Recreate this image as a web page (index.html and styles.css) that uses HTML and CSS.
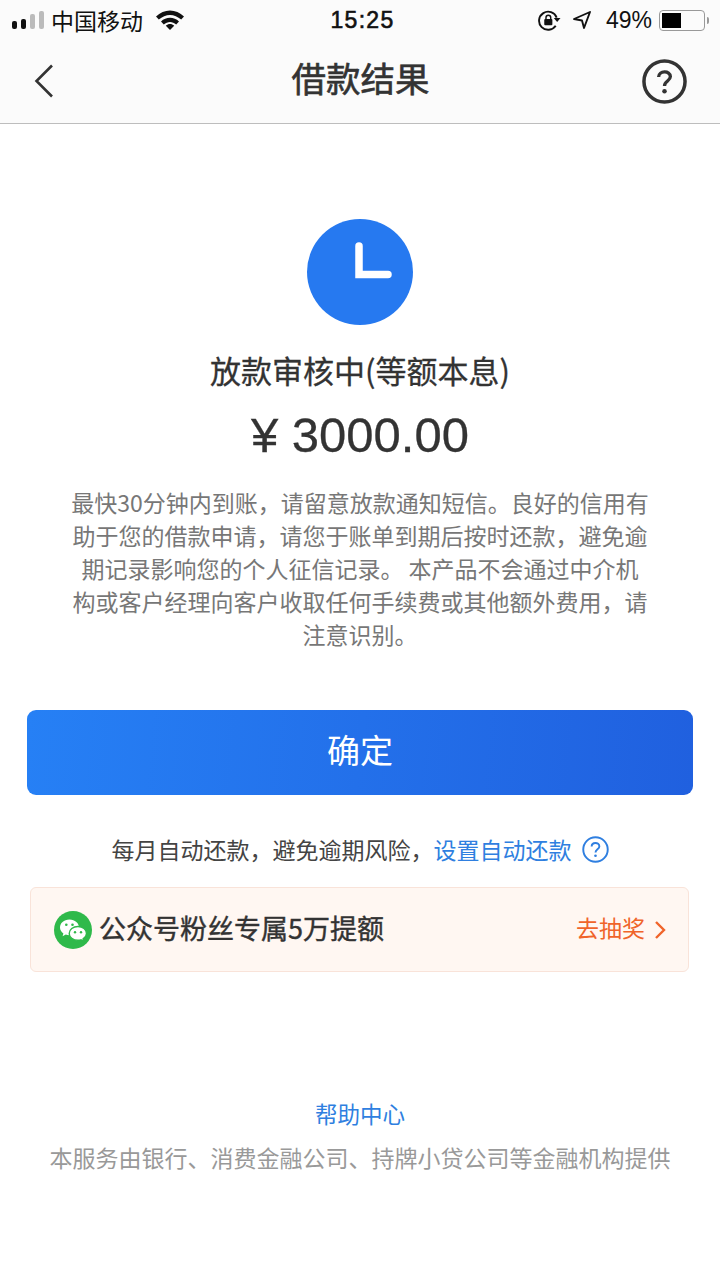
FILE: index.html
```html
<!DOCTYPE html>
<html lang="zh-CN">
  <head>
    <meta charset="UTF-8" />
    <meta name="viewport" content="width=device-width, initial-scale=1.0" />
    <title>借款结果</title>
    <link rel="stylesheet" href="styles.css">
  </head>
  <body>
    <div class="top">
      <div class="statusBar">
        <div class="statusLeft">
          <div class="signal">
            <span class="bar on"></span>
            <span class="bar on"></span>
            <span class="bar"></span>
            <span class="bar"></span>
          </div>
          <span class="carrier">中国移动</span>
          <svg class="wifi" width="28" height="20" viewBox="0 0 28 20">
            <path d="M0 6.500C8 -1.500 20 -1.500 28 6.500L25.200 9.600C18.500 3.300 9.500 3.300 2.800 9.600Z" fill="#111" />
            <path d="M5 11.500C10 6.500 18 6.500 23 11.500L20.200 14.500C16.500 11 11.500 11 7.800 14.500Z" fill="#111" />
            <path d="M9.800 15.800C12.300 13.500 15.700 13.500 18.200 15.800L14 20Z" fill="#111" />
          </svg>
        </div>
        <span class="time">15:25</span>
        <div class="statusRight">
          <svg class="lock" width="23" height="21" viewBox="0 0 24 22">
            <path d="M18.500 16.500A9.500 9.500 0 1 1 19.500 8" fill="none" stroke="#111" stroke-width="2" />
            <path d="M16.500 8.500H23.500L20 12.500Z" fill="#111" />
            <rect x="6.500" y="9.500" width="8.500" height="6.500" rx="1" fill="#111" />
            <path d="M8.300 10V8A2.500 2.500 0 0 1 13.300 8V10" fill="none" stroke="#111" stroke-width="1.500" />
          </svg>
          <svg class="location" width="20" height="20" viewBox="0 0 20 20">
            <path d="M18 2L2 9L10 10.500L12 18Z" fill="none" stroke="#111" stroke-width="1.900" stroke-linejoin="round" />
          </svg>
          <span class="percent">49%</span>
          <div class="battery"><div class="batteryFill"></div></div>
          <div class="batteryTip"></div>
        </div>
      </div>
      <div class="navBar">
        <svg class="back" width="20" height="34" viewBox="0 0 20 34">
          <path d="M18 1.500L2.500 17L18 32.500" fill="none" stroke="#333" stroke-width="2.600" />
        </svg>
        <h1 class="navTitle">借款结果</h1>
        <svg class="help" width="45" height="45" viewBox="0 0 46 46">
          <circle cx="23" cy="23" r="21" fill="none" stroke="#333" stroke-width="3.600" />
          <path d="M17 18.500C17 11.500 29 11.500 29 18C29 22.500 23 22.500 23 27.500" fill="none" stroke="#333" stroke-width="3.400" />
          <circle cx="23" cy="33" r="2.300" fill="#333" />
        </svg>
      </div>
    </div>

    <div class="result">
      <svg class="clock" width="106" height="106" viewBox="0 0 106 106">
        <circle cx="53" cy="53" r="53" fill="#2679f0" />
        <path d="M52 27V55.500H81" fill="none" stroke="#fff" stroke-width="7.500" stroke-linecap="round" />
      </svg>
      <h2 class="status">放款审核中(等额本息)</h2>
      <div class="amount">¥ 3000.00</div>
      <p class="desc">最快30分钟内到账，请留意放款通知短信。良好的信用有助于您的借款申请，请您于账单到期后按时还款，避免逾期记录影响您的个人征信记录。 本产品不会通过中介机构或客户经理向客户收取任何手续费或其他额外费用，请注意识别。</p>
      <button class="confirm">确定</button>
      <div class="autoPay">
        <span>每月自动还款，避免逾期风险，</span>
        <span class="link">设置自动还款</span>
        <svg class="autoHelp" width="27" height="27" viewBox="0 0 28 28">
          <circle cx="14" cy="14" r="12.700" fill="none" stroke="#2f7fe0" stroke-width="2" />
          <path d="M10 11C10 6 18 6 18 10.800C18 13.800 14 13.800 14 17" fill="none" stroke="#2f7fe0" stroke-width="2" />
          <circle cx="14" cy="20.500" r="1.400" fill="#2f7fe0" />
        </svg>
      </div>
    </div>

    <div class="promo">
      <div class="promoLeft">
        <svg class="wechat" width="38" height="38" viewBox="0 0 38 38">
          <circle cx="19" cy="19" r="19" fill="#2fb94a" />
          <path d="M15.500 8.500C9.700 8.500 6 12.300 6 16.500C6 19 7.300 21 9.400 22.400L8.600 25.200L11.800 23.600C13 24 14 24.200 15.500 24.200C20.500 24.200 25 20.800 25 16.500C25 12.300 21 8.500 15.500 8.500Z" fill="#fff" />
          <path d="M24 15.500C19 15.500 15.200 18.600 15.200 22.400C15.200 26.200 19 29.300 24 29.300C25 29.300 26 29.100 27 28.800L29.800 30.300L29.100 27.800C31 26.500 32.500 24.600 32.500 22.400C32.500 18.600 28.700 15.500 24 15.500Z" fill="#fff" stroke="#2fb94a" stroke-width="1.400" />
          <circle cx="12.300" cy="13.800" r="1.300" fill="#2fb94a" />
          <circle cx="18.500" cy="13.800" r="1.300" fill="#2fb94a" />
          <circle cx="21" cy="21.300" r="1.200" fill="#2fb94a" />
          <circle cx="27" cy="21.300" r="1.200" fill="#2fb94a" />
        </svg>
        <span class="promoText">公众号粉丝专属5万提额</span>
      </div>
      <div class="promoRight">
        <span class="promoLink">去抽奖</span>
        <svg width="12" height="20" viewBox="0 0 12 20">
          <path d="M2 2L10 10L2 18" fill="none" stroke="#f0642a" stroke-width="2.400" />
        </svg>
      </div>
    </div>

    <div class="footer">
      <div class="helpCenter">帮助中心</div>
      <div class="notice">本服务由银行、消费金融公司、持牌小贷公司等金融机构提供</div>
    </div>
  </body>
</html>
```

FILE: styles.css
```css
* {
  box-sizing: border-box;
}
body {
  margin: 0;
  height: 1280px;
  background-color: #fff;
  font-family: "Noto Sans CJK SC", "Liberation Sans", sans-serif;
  color: #333;
}

.top {
  height: 124px;
  background-color: #fbfbfb;
  border-bottom: 1px solid #bdbdbd;
}
.statusBar {
  height: 40px;
  padding: 0 11px 0 12px;
  display: flex;
  align-items: center;
  justify-content: space-between;
  color: #111;
}
.statusLeft,
.statusRight {
  width: 210px;
  display: flex;
  align-items: center;
}
.statusRight {
  justify-content: flex-end;
}
.signal {
  display: flex;
  align-items: flex-end;
  gap: 4px;
  margin-right: 7px;
}
.bar {
  width: 5px;
  background-color: #bbb;
  border-radius: 2px;
}
.bar:nth-child(1) { height: 8px; }
.bar:nth-child(2) { height: 10px; }
.bar:nth-child(3) { height: 15px; }
.bar:nth-child(4) { height: 18px; }
.bar.on {
  background-color: #111;
}
.carrier {
  font-size: 23px;
  margin-right: 13px;
}
.time {
  margin-left: 4px;
  font-family: "Liberation Sans", sans-serif;
  font-size: 23px;
  letter-spacing: 1.300px;
  -webkit-text-stroke: 0.6px #111;
}
.lock {
  margin-right: 11px;
}
.location {
  margin-right: 14px;
}
.percent {
  font-family: "Liberation Sans", sans-serif;
  font-size: 23px;
  margin-right: 7px;
}
.battery {
  width: 46px;
  height: 21px;
  border: 1.500px solid #999;
  border-radius: 4px;
  padding: 2px;
}
.batteryFill {
  width: 19px;
  height: 100%;
  background-color: #000;
}
.batteryTip {
  width: 2px;
  height: 7px;
  margin-left: 2px;
  background-color: #999;
  border-radius: 0 2px 2px 0;
}

.navBar {
  height: 83px;
  padding: 0 33px 1px 34px;
  display: grid;
  grid-template-columns: 1fr auto 1fr;
  align-items: center;
}
.navTitle {
  margin: 0 0 8px;
  font-size: 34.500px;
  font-weight: 400;
  -webkit-text-stroke: 0.6px #333;
}
.help {
  justify-self: end;
}

.result {
  display: flex;
  flex-direction: column;
  align-items: center;
  padding-top: 95px;
}
.status {
  margin: 24px 0 0;
  font-size: 31px;
  font-weight: 400;
  line-height: 42px;
  -webkit-text-stroke: 0.3px #333;
}
.amount {
  margin-top: 17px;
  font-family: "Liberation Sans", sans-serif;
  font-size: 49px;
  line-height: 54px;
  -webkit-text-stroke: 0.3px #333;
}
.desc {
  width: 579px;
  margin: 24px 0 0;
  font-size: 23px;
  line-height: 33px;
  color: #777;
  text-align: center;
}
.confirm {
  width: 666px;
  height: 85px;
  margin-top: 59px;
  padding: 0 0 8px;
  border: 0;
  border-radius: 9px;
  background: linear-gradient(95deg, #2680f5, #2060df);
  color: #fff;
  font-family: inherit;
  font-size: 33px;
}
.autoPay {
  margin-top: 37px;
  display: flex;
  align-items: center;
  font-size: 23px;
  line-height: 34px;
  color: #444;
}
.link {
  color: #2f7fe0;
}
.autoHelp {
  margin-left: 10px;
}

.promo {
  height: 85px;
  margin: 21px 31px 0 30px;
  padding: 0 22px 0 23px;
  display: flex;
  align-items: center;
  justify-content: space-between;
  background-color: #fff7f2;
  border: 1px solid #f9e3d9;
  border-radius: 6px;
}
.promoLeft,
.promoRight {
  display: flex;
  align-items: center;
}
.wechat {
  margin-right: 7px;
}
.promoText {
  margin-bottom: 4px;
  font-size: 27px;
  -webkit-text-stroke: 0.4px #333;
}
.promoRight {
  gap: 9px;
  font-size: 23px;
  color: #f0642a;
}
.promoLink {
  margin-bottom: 5px;
}

.footer {
  margin-top: 125px;
  text-align: center;
}
.helpCenter {
  font-size: 22.500px;
  line-height: 32px;
  color: #2f7fe0;
}
.notice {
  margin-top: 12px;
  font-size: 23px;
  line-height: 33px;
  color: #999;
}
```
